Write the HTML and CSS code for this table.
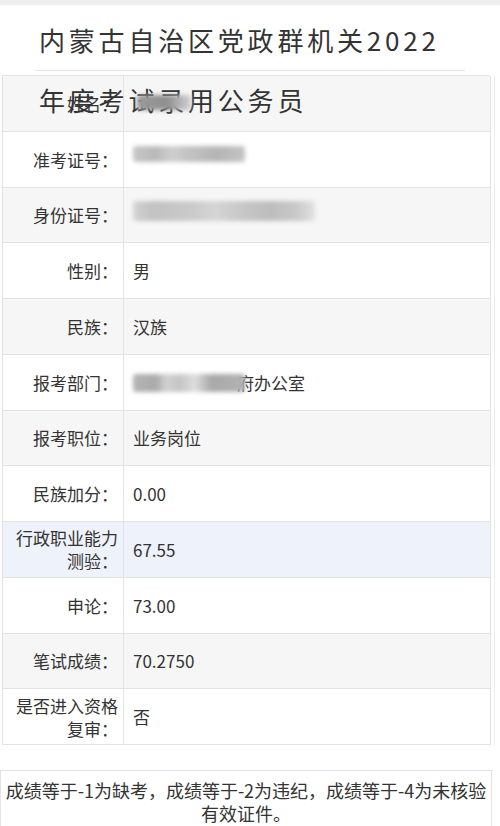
FILE: index.html
```html
<!DOCTYPE html>
<html lang="zh-CN">
<head>
<meta charset="utf-8">
<title>成绩查询</title>
<link rel="stylesheet" href="styles.css">
</head>
<body>
<div class="topbar"></div>
<h1 class="title">内蒙古自治区党政群机关2022<br>年度考试录用公务员</h1>
<div class="wrap">
  <div class="sheet">
    <div class="cell label alt">姓名：</div>
    <div class="cell value alt"><span class="blur b1"></span></div>

    <div class="cell label">准考证号：</div>
    <div class="cell value"><span class="blur b2"></span></div>

    <div class="cell label alt">身份证号：</div>
    <div class="cell value alt"><span class="blur b3"></span></div>

    <div class="cell label">性别：</div>
    <div class="cell value">男</div>

    <div class="cell label alt">民族：</div>
    <div class="cell value alt">汉族</div>

    <div class="cell label">报考部门：</div>
    <div class="cell value"><span class="blur b4"></span><span class="dept">府办公室</span></div>

    <div class="cell label alt">报考职位：</div>
    <div class="cell value alt">业务岗位</div>

    <div class="cell label">民族加分：</div>
    <div class="cell value">0.00</div>

    <div class="cell label hl">行政职业能力测验：</div>
    <div class="cell value hl">67.55</div>

    <div class="cell label">申论：</div>
    <div class="cell value">73.00</div>

    <div class="cell label alt">笔试成绩：</div>
    <div class="cell value alt">70.2750</div>

    <div class="cell label">是否进入资格复审：</div>
    <div class="cell value">否</div>
  </div>
</div>
<div class="note">成绩等于-1为缺考，成绩等于-2为违纪，成绩等于-4为未核验有效证件。</div>
</body>
</html>
```
FILE: styles.css
```css
html, body {
  margin: 0;
  padding: 0;
  background: #ffffff;
}
body {
  font-family: "Noto Sans CJK SC", "Noto Sans", sans-serif;
  color: #333333;
  width: 500px;
  height: 826px;
  overflow: hidden;
}
.topbar {
  height: 5px;
  background: #eeeeee;
}
.title {
  position: relative;
  z-index: 1;
  margin: 5px 35px 0 35px;
  padding-left: 4px;
  height: 60px;
  line-height: 60px;
  font-size: 26px;
  font-weight: normal;
  letter-spacing: 3.8px;
  color: #333333;
  border-bottom: 1px solid #e6e6e6;
  white-space: nowrap;
}
.wrap {
  margin: 4px 6px 0 2px;
  border-right: 1px solid #eeeeee;
  width: 492px;
}
.sheet {
  display: grid;
  grid-template-columns: 121px 367px;
  grid-auto-rows: 55.75px;
  border-top: 1px solid #e3e3e3;
  border-left: 1px solid #e3e3e3;
  width: 488px;
  box-sizing: border-box;
}
.cell {
  display: flex;
  align-items: center;
  border-right: 1px solid #e3e3e3;
  border-bottom: 1px solid #e3e3e3;
  font-size: 17px;
  line-height: 23px;
  color: #333333;
  background: #ffffff;
}
.label {
  justify-content: flex-end;
  text-align: right;
  padding: 0 5px 0 5px;
}
.value {
  padding-left: 9px;
}
.alt {
  background: #f6f6f6;
}
.hl {
  background: #eef2fb;
}
.blur {
  position: relative;
  z-index: 2;
  display: inline-block;
  filter: blur(2px);
  border-radius: 3px;
}
.b1 {
  width: 54px;
  height: 15px;
  margin-left: 4px;
  margin-top: -2px;
  background: linear-gradient(90deg, #9a9a9a 0%, #8f8f8f 55%, #b5b5b5 80%, #d0d0d0 100%);
}
.b2 {
  width: 112px;
  height: 16px;
  background: linear-gradient(90deg, #c6c6c6 0%, #b9b9b9 20%, #cfcfcf 35%, #c2c2c2 50%, #b5b5b5 75%, #c4c4c4 100%);
  margin-top: -10px;
}
.b3 {
  width: 182px;
  height: 20px;
  background: linear-gradient(90deg, #d4d4d4 0%, #c2c2c2 10%, #c9c9c9 30%, #d5d5d5 45%, #c7c7c7 60%, #bdbdbd 75%, #c9c9c9 90%, #e2e2e2 100%);
  margin-top: -8px;
}
.b4 {
  width: 112px;
  height: 18px;
  margin-right: -8px;
  background: linear-gradient(90deg, #b4b4b4 0%, #aaaaaa 20%, #d2d2d2 30%, #c5c5c5 42%, #dedede 55%, #a9a9a9 70%, #b2b2b2 100%);
  margin-top: 2px;
}
.dept {
  position: relative;
  z-index: 1;
}
.note {
  margin: 25px 10px 0 0;
  border: 1px solid #e3e3e3;
  border-bottom: none;
  padding: 8px 4px 0 4px;
  font-size: 18px;
  line-height: 23px;
  text-align: center;
  color: #333333;
  width: 482px;
  height: 52px;
}
```
